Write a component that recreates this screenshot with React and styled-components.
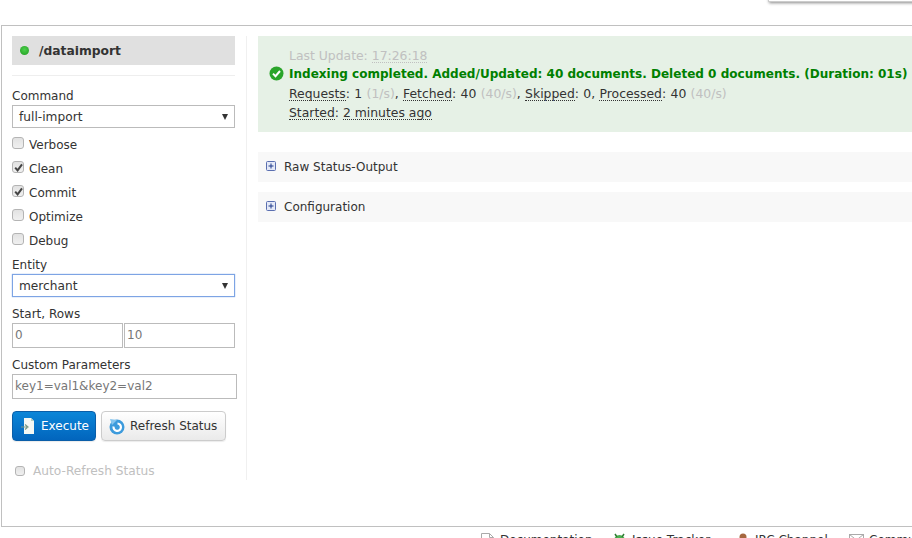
import React from 'react';
import styled, { createGlobalStyle } from 'styled-components';

const GlobalStyle = createGlobalStyle`
	html, body {
		margin: 0;
		padding: 0;
		background: #fff;
	}
	body {
		font-family: 'DejaVu Sans', Verdana, sans-serif;
		font-size: 12px;
		color: #333;
	}
`;

const Page = styled.div`
	position: relative;
	width: 912px;
	height: 538px;
	overflow: hidden;
	padding-top: 25px;
	box-sizing: border-box;
`;

const Popup = styled.div`
	position: absolute;
	top: -20px;
	left: 768px;
	width: 200px;
	height: 20px;
	background: #fff;
	border: 1px solid #ccc;
	box-shadow: 1px 1px 3px #888;
`;

const Frame = styled.div`
	display: flex;
	width: 1000px;
	height: 502px;
	margin-left: 1px;
	padding: 10px;
	box-sizing: border-box;
	border: 1px solid #c0c0c0;
`;

const Sidebar = styled.form`
	width: 235px;
	height: 444px;
	flex: none;
	box-sizing: border-box;
	padding-right: 11px;
	border-right: 1px solid #f0f0f0;
`;

const Heading = styled.div`
	display: flex;
	align-items: center;
	gap: 10px;
	height: 29px;
	padding-left: 8px;
	background: #e0e0e0;
	font-size: 12.3px;
	font-weight: bold;
`;

const Led = styled.span`
	width: 9px;
	height: 9px;
	border-radius: 50%;
	background: radial-gradient(circle at 50% 40%, #4cd04c, #1f9a1f);
`;

const Divider = styled.div`
	height: 1px;
	margin: 10px 0 12px;
	background: #eee;
`;

const Label = styled.div`
	height: 17px;
	line-height: 16px;
	font-size: 12px;
`;

const EntityLabel = styled(Label)`
	padding-top: 4px;
`;

const SelectBox = styled.div`
	display: flex;
	align-items: center;
	justify-content: space-between;
	height: 23px;
	padding: 0 6px;
	box-sizing: border-box;
	border: 1px solid ${({ $focus }) => ($focus ? '#7da4e4' : '#bbb')};
	box-shadow: ${({ $focus }) => ($focus ? '0 0 1px #7da4e4' : 'none')};
	font-size: 12.2px;
	margin-bottom: ${({ $after }) => $after}px;
`;

const Arrow = styled.span`
	width: 0;
	height: 0;
	border-left: 3.5px solid transparent;
	border-right: 3.5px solid transparent;
	border-top: 6px solid #333;
`;

const CheckRow = styled.label`
	display: flex;
	align-items: center;
	gap: ${({ $muted }) => ($muted ? '8px' : '5px')};
	height: 24px;
	font-size: ${({ $muted }) => ($muted ? '12.2px' : '12px')};
	color: ${({ $muted }) => ($muted ? '#c0c0c0' : '#333')};
	padding-left: ${({ $muted }) => ($muted ? '3px' : '0')};
`;

const Box = styled.span`
	display: flex;
	align-items: center;
	justify-content: center;
	width: ${({ $small }) => ($small ? 8 : 10)}px;
	height: ${({ $small }) => ($small ? 8 : 10)}px;
	margin-top: ${({ $small }) => ($small ? 0 : -4)}px;
	border: 1px solid #b4b4b4;
	border-radius: 3px;
	background: linear-gradient(#e2e2e2, #f0f0f0);
`;

const Pair = styled.div`
	display: grid;
	grid-template-columns: 111px 111px;
	gap: 1px;
	margin-bottom: 9px;
`;

const Field = styled.div`
	height: 25px;
	line-height: 23px;
	width: ${({ $w }) => ($w ? `${$w}px` : 'auto')};
	padding-left: 2px;
	box-sizing: border-box;
	border: 1px solid #bbb;
	color: #777;
	font-size: 12px;
`;

const Buttons = styled.div`
	display: flex;
	gap: 5px;
	margin: 12px 0 18px;
`;

const Btn = styled.button`
	display: flex;
	align-items: center;
	gap: 5px;
	height: 30px;
	padding: 0 ${({ $primary }) => ($primary ? 6 : 8)}px 0 7px;
	box-sizing: border-box;
	font: 12px 'DejaVu Sans', Verdana, sans-serif;
	border-radius: 4px;
	border: 1px solid ${({ $primary }) => ($primary ? '#0a5ea8' : '#ccc')};
	color: ${({ $primary }) => ($primary ? '#fff' : '#333')};
	background: ${({ $primary }) =>
		$primary ? 'linear-gradient(#0b86d8, #0265bd)' : 'linear-gradient(#fff, #eaeaea)'};
	box-shadow: 0 1px 1px rgba(0, 0, 0, 0.08);
`;

const Content = styled.div`
	flex: 1;
	padding-left: 11px;
`;

const Status = styled.div`
	position: relative;
	height: 96px;
	box-sizing: border-box;
	padding: 10px 0 0 31px;
	margin-bottom: 20px;
	background: #e6f1e6;
	line-height: 19px;
	font-size: 12.4px;
`;

const Muted = styled.span`
	color: #c0c0c0;
`;

const Abbr = styled.span`
	border-bottom: 1px dotted #333;
	line-height: 13px;
	display: inline-block;
`;

const MutedAbbr = styled(Abbr)`
	border-color: #c0c0c0;
`;

const Message = styled.div`
	color: #008000;
	font-weight: bold;
	font-size: 12.04px;
	white-space: nowrap;
`;

const Counts = styled.div`
	word-spacing: 0.4px;
`;

const StatusIcon = styled.svg`
	position: absolute;
	left: 11px;
	top: 30px;
`;

const Section = styled.div`
	display: flex;
	align-items: center;
	gap: 8px;
	height: 30px;
	padding-left: 8px;
	margin-bottom: 10px;
	background: #f8f8f8;
	font-size: 12px;
`;

const PlusIcon = styled.svg`
	margin-top: -2px;
`;

const Footer = styled.div`
	display: flex;
	height: 20px;
	margin-top: 6px;
	padding-left: 480px;
	font-size: 12px;
	white-space: nowrap;
`;

const FooterLink = styled.div`
	display: flex;
	gap: 5px;
	align-items: flex-start;
	width: ${({ $w }) => $w}px;
	flex: none;
	line-height: 14px;
`;

const Check = () => (
	<svg width="9" height="9" viewBox="0 0 9 9">
		<path d="M1.2 4.6 L3.6 7.4 L8 1.4" fill="none" stroke="#444" strokeWidth="2" />
	</svg>
);

const Option = ({ label, checked }) => (
	<CheckRow>
		<Box>{checked && <Check />}</Box>
		{label}
	</CheckRow>
);

const Plus = () => (
	<PlusIcon width="10" height="10" viewBox="0 0 10 10">
		<rect x="0.5" y="0.5" width="9" height="9" rx="1" fill="#e4e9f7" stroke="#5a6fb0" />
		<path d="M2.5 5 H7.5 M5 2.5 V7.5" stroke="#1f3a8a" />
	</PlusIcon>
);

const FileIcon = ({ stroke = '#aaa', fill = '#fff' }) => (
	<svg width="15" height="18" viewBox="0 0 15 18">
		<path d="M1.5 .5 H9.5 L13.5 4.5 V17.5 H1.5 Z" fill={fill} stroke={stroke} />
		<path d="M9.5 .5 V4.5 H13.5" fill="none" stroke={stroke} />
	</svg>
);

function App() {
	return (
		<>
			<GlobalStyle />
			<Page>
				<Popup />
				<Frame>
					<Sidebar>
						<Heading>
							<Led />
							/dataimport
						</Heading>
						<Divider />
						<Label>Command</Label>
						<SelectBox $after={5}>
							full-import
							<Arrow />
						</SelectBox>
						<Option label="Verbose" />
						<Option label="Clean" checked />
						<Option label="Commit" checked />
						<Option label="Optimize" />
						<Option label="Debug" />
						<EntityLabel>Entity</EntityLabel>
						<SelectBox $focus $after={9}>
							merchant
							<Arrow />
						</SelectBox>
						<Label>Start, Rows</Label>
						<Pair>
							<Field>0</Field>
							<Field>10</Field>
						</Pair>
						<Label>Custom Parameters</Label>
						<Field $w={225}>key1=val1&amp;key2=val2</Field>
						<Buttons>
							<Btn type="button" $primary>
								<svg width="16" height="18" viewBox="0 0 16 18">
									<path d="M4 1 H11 L14 4 V17 H4 Z" fill="#f4f8f4" />
									<path d="M11 1 V4 H14 Z" fill="#b9cfc0" />
									<path d="M1 10 H7 M5 7.5 L8 10 L5 12.5" fill="none" stroke="#7a9a88" strokeWidth="1.2" />
								</svg>
								Execute
							</Btn>
							<Btn type="button">
								<svg width="16" height="17" viewBox="0 0 16 17">
									<circle cx="8" cy="9" r="7.5" fill="#3d9bdc" />
									<path d="M8.5 5.5 A3.7 3.7 0 1 1 4.6 8.5" fill="none" stroke="#fff" strokeWidth="2.2" />
									<path d="M1 1 L8 2 L3 7 Z" fill="#86c5ee" />
								</svg>
								Refresh Status
							</Btn>
						</Buttons>
						<CheckRow $muted>
							<Box $small />
							Auto-Refresh Status
						</CheckRow>
					</Sidebar>
					<Content>
						<Status>
							<StatusIcon width="15" height="15" viewBox="0 0 15 15">
								<circle cx="7.5" cy="7.5" r="7" fill="#2aa52a" />
								<path d="M4 7.6 L6.5 10.2 L11 5" fill="none" stroke="#fff" strokeWidth="2" />
							</StatusIcon>
							<div>
								<Muted>
									Last Update: <MutedAbbr>17:26:18</MutedAbbr>
								</Muted>
							</div>
							<Message>
								Indexing completed. Added/Updated: 40 documents. Deleted 0 documents. (Duration: 01s)
							</Message>
							<Counts>
								<Abbr>Requests</Abbr>: 1 <Muted>(1/s)</Muted>, <Abbr>Fetched</Abbr>: 40{' '}
								<Muted>(40/s)</Muted>, <Abbr>Skipped</Abbr>: 0, <Abbr>Processed</Abbr>: 40{' '}
								<Muted>(40/s)</Muted>
							</Counts>
							<div>
								<Abbr>Started</Abbr>: <Abbr>2 minutes ago</Abbr>
							</div>
						</Status>
						<Section>
							<Plus />
							Raw Status-Output
						</Section>
						<Section>
							<Plus />
							Configuration
						</Section>
					</Content>
				</Frame>
				<Footer>
					<FooterLink $w={132}>
						<FileIcon />
						Documentation
					</FooterLink>
					<FooterLink $w={123}>
						<svg width="15" height="16" viewBox="0 0 15 16">
							<ellipse cx="7.5" cy="9" rx="6" ry="7" fill="#4caf50" />
							<path d="M3 1 L5 4 M12 1 L10 4" stroke="#2e7d32" strokeWidth="1.5" />
						</svg>
						Issue Tracker
					</FooterLink>
					<FooterLink $w={114}>
						<svg width="15" height="16" viewBox="0 0 15 16">
							<circle cx="8" cy="4" r="3.5" fill="#a5673f" />
							<path d="M2 16 L4 8 H12 L14 16 Z" fill="#7b4a2c" />
						</svg>
						IRC Channel
					</FooterLink>
					<FooterLink $w={120}>
						<svg width="15" height="12" viewBox="0 0 15 12">
							<rect x="0.5" y="1.5" width="14" height="10" fill="#fff" stroke="#aaa" />
							<path d="M.5 1.5 L7.5 7 L14.5 1.5" fill="none" stroke="#aaa" />
						</svg>
						Community
					</FooterLink>
				</Footer>
			</Page>
		</>
	);
}

export default App;
